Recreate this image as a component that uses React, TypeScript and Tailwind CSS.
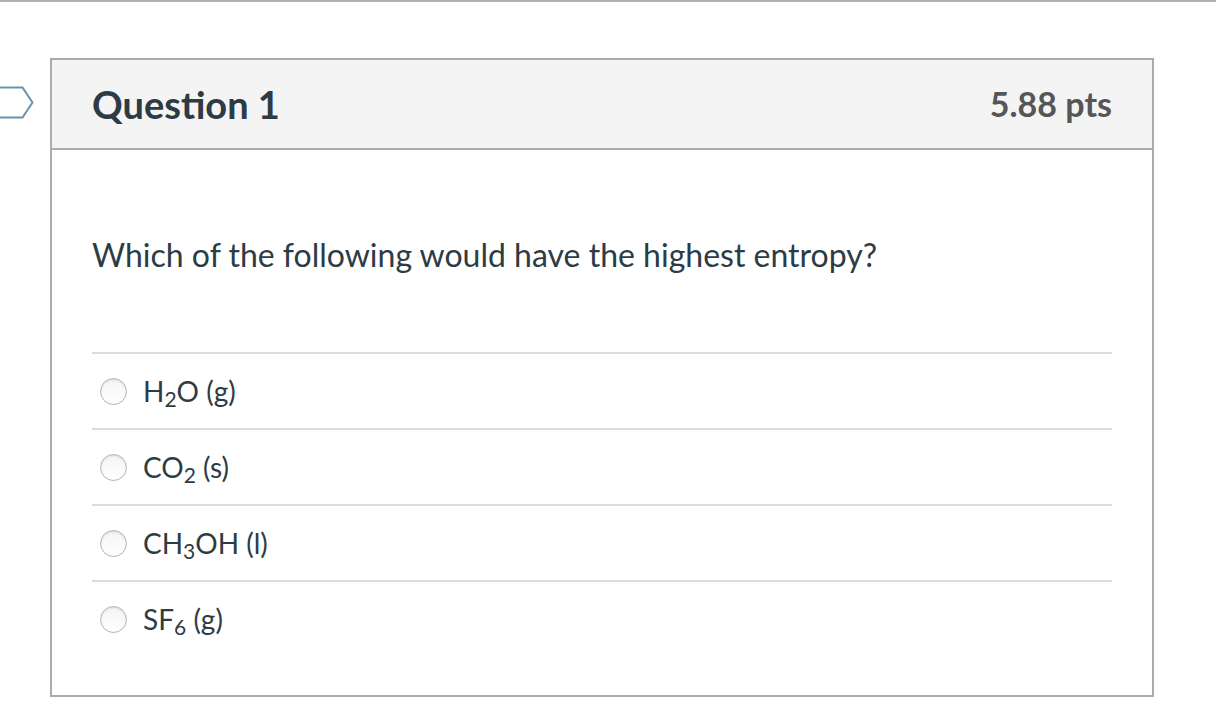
import React from 'react';

const options: { id: string; label: React.ReactNode }[] = [
  { id: 'a', label: <>H<sub>2</sub>O (g)</> },
  { id: 'b', label: <>CO<sub>2</sub> (s)</> },
  { id: 'c', label: <>CH<sub>3</sub>OH (l)</> },
  { id: 'd', label: <>SF<sub>6</sub> (g)</> },
];

const Flag: React.FC = () => (
  <svg className="absolute left-0 top-[86px]" width="36" height="34" viewBox="0 0 36 34">
    <path d="M-3 1.5 H22.5 L32.5 16.5 L22.5 31.5 H-3" fill="#fff" stroke="#6b93ad" strokeWidth="2" />
  </svg>
);

const Radio: React.FC = () => (
  <span className="block w-[27px] h-[27px] shrink-0 rounded-full border border-[#b4b4b4] bg-gradient-to-b from-[#f4f4f4] to-white shadow-[inset_0_1px_2px_rgba(0,0,0,0.12)]" />
);

export default function App() {
  return (
    <div className="relative min-h-[726px] bg-white font-['Lato','Liberation_Sans',sans-serif] text-[#2d3b45]">
      <div className="h-[2px] bg-[#b0b0b0]" />
      <Flag />
      <div className="ml-[50px] mt-[56px] w-[1104px] border-2 border-[#ababab]">
        <div className="flex h-[90px] items-center justify-between border-b-2 border-[#ababab] bg-[#f4f4f4] px-10">
          <h2 className="text-[38px] font-bold leading-none">Question 1</h2>
          <div className="text-[34px] font-bold leading-none text-[#565656]">5.88 pts</div>
        </div>
        <div className="px-10 pb-[39px]">
          <p className="pt-[82px] text-[32px] leading-[45px]">Which of the following would have the highest entropy?</p>
          <div className="mt-[75px]">
            {options.map((o) => (
              <label key={o.id} className="flex h-[76px] items-center gap-[16px] border-t-2 border-[#dcdcdc] pl-[8px]">
                <Radio />
                <span className="text-[28px] leading-[33px]">{o.label}</span>
              </label>
            ))}
          </div>
        </div>
      </div>
    </div>
  );
}
